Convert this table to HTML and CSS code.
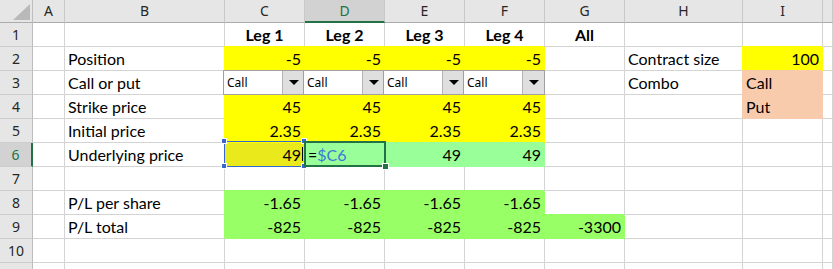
FILE: index.html
```html
<!DOCTYPE html>
<html>
<head>
<meta charset="utf-8">
<link rel="stylesheet" href="styles.css">
</head>
<body>
<div class="sheet">
  <!-- header row -->
  <div class="corner"><svg class="tri" width="17" height="16" viewBox="0 0 17 16"><polygon points="0,16 17,16 17,0" fill="#b9b9b9"/></svg></div>
  <div class="ch">A</div><div class="ch">B</div><div class="ch">C</div><div class="ch sel">D</div><div class="ch">E</div><div class="ch">F</div><div class="ch">G</div><div class="ch">H</div><div class="ch">I</div><div class="ch"></div>

  <!-- row 1 -->
  <div class="rh">1</div><div class="c"></div><div class="c"></div>
  <div class="c hdr">Leg 1</div><div class="c hdr">Leg 2</div><div class="c hdr">Leg 3</div><div class="c hdr">Leg 4</div><div class="c hdr">All</div>
  <div class="c"></div><div class="c"></div><div class="c"></div>

  <!-- row 2 -->
  <div class="rh">2</div><div class="c"></div><div class="c">Position</div>
  <div class="c num y">-5</div><div class="c num y">-5</div><div class="c num y">-5</div><div class="c num y">-5</div>
  <div class="c"></div><div class="c">Contract size</div><div class="c num y">100</div><div class="c"></div>

  <!-- row 3 -->
  <div class="rh">3</div><div class="c"></div><div class="c">Call or put</div>
  <div class="c y ddcell"><div class="dd"><span class="ddtext">Call</span><span class="ddbtn"><span class="arrow"></span></span></div></div>
  <div class="c y ddcell"><div class="dd"><span class="ddtext">Call</span><span class="ddbtn"><span class="arrow"></span></span></div></div>
  <div class="c y ddcell"><div class="dd"><span class="ddtext">Call</span><span class="ddbtn"><span class="arrow"></span></span></div></div>
  <div class="c y ddcell"><div class="dd"><span class="ddtext">Call</span><span class="ddbtn"><span class="arrow"></span></span></div></div>
  <div class="c"></div><div class="c">Combo</div><div class="c s">Call</div><div class="c"></div>

  <!-- row 4 -->
  <div class="rh">4</div><div class="c"></div><div class="c">Strike price</div>
  <div class="c num y">45</div><div class="c num y">45</div><div class="c num y">45</div><div class="c num y">45</div>
  <div class="c"></div><div class="c"></div><div class="c s">Put</div><div class="c"></div>

  <!-- row 5 -->
  <div class="rh">5</div><div class="c"></div><div class="c">Initial price</div>
  <div class="c num y">2.35</div><div class="c num y">2.35</div><div class="c num y">2.35</div><div class="c num y">2.35</div>
  <div class="c"></div><div class="c"></div><div class="c"></div><div class="c"></div>

  <!-- row 6 -->
  <div class="rh sel">6</div><div class="c"></div><div class="c">Underlying price</div>
  <div class="c num yd refcell">49<span class="caret"></span>
    <span class="refbox"></span>
    <span class="hnd h-tl"></span><span class="hnd h-tr"></span><span class="hnd h-bl"></span><span class="hnd h-br"></span>
  </div>
  <div class="c m editcell"><span>=</span><span class="refcolor">$C6</span>
    <span class="editbox"></span><span class="fill"></span>
  </div>
  <div class="c num m">49</div><div class="c num m">49</div>
  <div class="c"></div><div class="c"></div><div class="c"></div><div class="c"></div>

  <!-- row 7 -->
  <div class="rh">7</div><div class="c"></div><div class="c"></div><div class="c"></div><div class="c"></div><div class="c"></div><div class="c"></div><div class="c"></div><div class="c"></div><div class="c"></div><div class="c"></div>

  <!-- row 8 -->
  <div class="rh">8</div><div class="c"></div><div class="c">P/L per share</div>
  <div class="c num g">-1.65</div><div class="c num g">-1.65</div><div class="c num g">-1.65</div><div class="c num g">-1.65</div>
  <div class="c"></div><div class="c"></div><div class="c"></div><div class="c"></div>

  <!-- row 9 -->
  <div class="rh">9</div><div class="c"></div><div class="c">P/L total</div>
  <div class="c num g">-825</div><div class="c num g">-825</div><div class="c num g">-825</div><div class="c num g">-825</div>
  <div class="c num g">-3300</div><div class="c"></div><div class="c"></div><div class="c"></div>

  <!-- row 10 -->
  <div class="rh">10</div><div class="c"></div><div class="c"></div><div class="c"></div><div class="c"></div><div class="c"></div><div class="c"></div><div class="c"></div><div class="c"></div><div class="c"></div><div class="c"></div>

  <!-- row 11 (only its top edge is visible) -->
  <div class="rh"></div><div class="c"></div><div class="c"></div><div class="c"></div><div class="c"></div><div class="c"></div><div class="c"></div><div class="c"></div><div class="c"></div><div class="c"></div><div class="c"></div>
</div>
</body>
</html>
```

FILE: styles.css
```css
html, body {
  margin: 0;
  padding: 0;
  background: #fff;
}
body {
  width: 833px;
  height: 269px;
  overflow: hidden;
}
.sheet {
  display: grid;
  grid-template-columns: 33px 32px 160px 80px 80px 80px 80px 80px 118px 80px 1fr;
  grid-template-rows: 23px repeat(10, 24px) 7px;
  font-family: Lato, "Liberation Sans", sans-serif;
  font-size: 16px;
  color: #000;
}
.sheet > div {
  box-sizing: border-box;
  border-right: 1px solid #d4d4d4;
  border-bottom: 1px solid #d4d4d4;
  display: flex;
  align-items: flex-end;
  padding: 0 3px 3px 3px;
  line-height: 16px;
  white-space: nowrap;
  min-width: 0;
}
.corner {
  background: #e6e6e6;
  border-right-color: #bdbdbd !important;
  border-bottom-color: #ababab !important;
  position: relative;
}
.tri {
  position: absolute;
  left: 13px;
  top: 4px;
}
.sheet > .ch {
  background: #e6e6e6;
  justify-content: center;
  align-items: center;
  padding: 0;
  font-family: "Noto Sans", sans-serif;
  font-size: 14px;
  color: #262626;
  border-right-color: #c8c8c8;
  border-bottom-color: #ababab;
}
.sheet > .ch.sel {
  background: #d2d2d2;
  color: #217346;
  border-bottom: 2px solid #217346;
}
.sheet > .rh {
  background: #e6e6e6;
  justify-content: center;
  align-items: center;
  padding: 0;
  font-family: "Noto Sans", sans-serif;
  font-size: 14px;
  color: #262626;
  border-right-color: #bdbdbd;
  border-bottom-color: #cdcdcd;
}
.sheet > .rh.sel {
  background: #d2d2d2;
  color: #217346;
  border-right: 2px solid #217346;
}
.num {
  justify-content: flex-end;
}
.sheet > .hdr {
  justify-content: center;
  font-weight: bold;
}
.sheet > .y {
  background: #ffff00;
  border-color: #ffff00;
  box-shadow: -1px -1px 0 0 #ffff00;
}
.sheet > .yd {
  background: #e9e91c;
  border-color: #e9e91c;
}
.sheet > .g {
  background: #99ff66;
  border-color: #99ff66;
  box-shadow: -1px -1px 0 0 #99ff66;
}
.sheet > .m {
  background: #99ff99;
  border-color: #99ff99;
  box-shadow: -1px -1px 0 0 #99ff99;
}
.sheet > .s {
  background: #f8cbad;
  border-color: #f8cbad;
  box-shadow: -1px -1px 0 0 #f8cbad;
}

/* dropdown (data validation list) */
.sheet > .ddcell {
  padding: 0;
  align-items: flex-start;
}
.dd {
  position: relative;
  z-index: 1;
  box-sizing: border-box;
  flex: none;
  width: 82px;
  height: 25px;
  margin: -1px 0 0 -2px;
  background: #fff;
  border: 1px solid #a0a0a0;
  display: flex;
  align-items: center;
}
.ddtext {
  flex: 1;
  padding-left: 3px;
  font-family: "Noto Sans", sans-serif;
  font-size: 12px;
  color: #000;
}
.ddbtn {
  box-sizing: border-box;
  width: 22px;
  height: 23px;
  background: #dfdfdf;
  border-left: 1px solid #b4b4b4;
  display: flex;
  align-items: center;
  justify-content: center;
}
.arrow {
  width: 0;
  height: 0;
  border-left: 5px solid transparent;
  border-right: 5px solid transparent;
  border-top: 5px solid #000;
}

/* referenced cell C6 */
.refcell {
  position: relative;
}
.caret {
  position: absolute;
  right: 1px;
  top: 4px;
  width: 1px;
  height: 14px;
  background: #000;
}
.refbox {
  position: absolute;
  left: -1px;
  top: -2px;
  width: 81px;
  height: 26px;
  box-sizing: border-box;
  border: 1px solid #3468cc;
}
.hnd {
  position: absolute;
  box-sizing: border-box;
  width: 6px;
  height: 6px;
  background: #3468cc;
  border: 1px solid #fff;
}
.h-tl { left: -4px; top: -5px; }
.h-tr { left: 76px; top: -5px; }
.h-bl { left: -4px; top: 20px; }
.h-br { left: 76px; top: 20px; }

/* editing cell D6 */
.editcell {
  position: relative;
}
.refcolor {
  color: #3c78d8;
}
.editbox {
  position: absolute;
  left: -1px;
  top: -2px;
  width: 82px;
  height: 26px;
  box-sizing: border-box;
  border: 2px solid #217346;
}
.fill {
  position: absolute;
  left: 77px;
  top: 20px;
  width: 7px;
  height: 7px;
  box-sizing: border-box;
  background: #217346;
  border: 1px solid #fff;
}
```
